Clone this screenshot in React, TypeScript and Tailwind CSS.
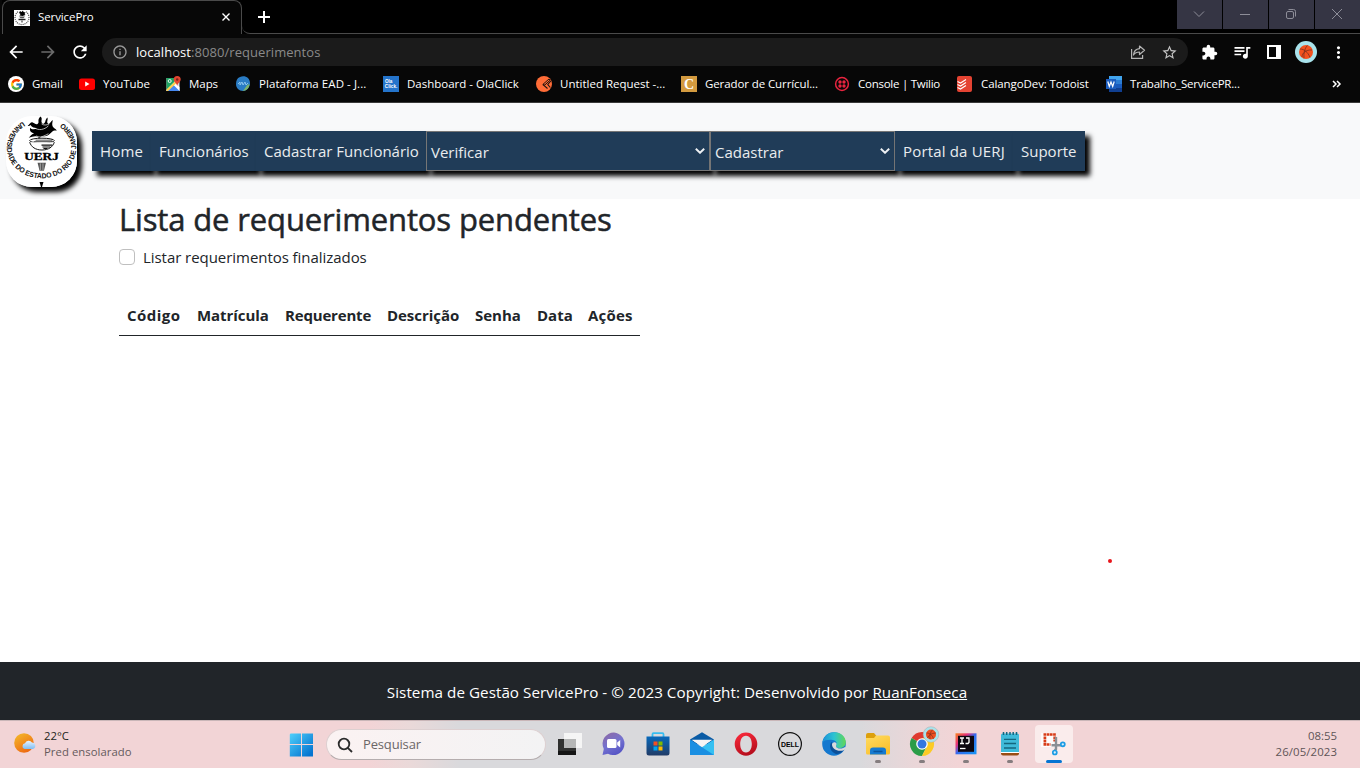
import type { ReactNode } from 'react';
import { FcGoogle } from 'react-icons/fc';
import {
  MdArrowBack,
  MdArrowForward,
  MdRefresh,
  MdInfoOutline,
  MdStarBorder,
  MdExtension,
  MdQueueMusic,
  MdMoreVert,
} from 'react-icons/md';

function UerjFavicon({ className }: { className: string }) {
  return (
    <svg viewBox="0 0 16 16" className={className}>
      <path d="M0 0h16v16H0z" fill="#fff" />
      <path d="M4 1.800A7 7 0 1 0 12 1.800" stroke="#555" strokeWidth="1.200" strokeDasharray="1.100 .9" fill="none" />
      <path d="M6 1l1.500 1L9 .5l.5 1.500 2 .5-1 1.500 1 1-3 1-3-.5 1-1.500-1.500-1z" fill="#000" />
      <path d="M5 6.500h6L9.500 8.300h-3z" fill="#555" />
      <path d="M4.500 9.500h7" stroke="#222" strokeWidth="1.400" />
      <path d="M8 10.500v2" stroke="#444" strokeWidth="1.200" />
    </svg>
  );
}

function UerjLogo({ className }: { className: string }) {
  return (
    <svg viewBox="0 0 72 72" className={className}>
      <defs>
        <path id="outer" d="M18 5.200 A35.200 31.200 0 1 0 55 5.700" />
      </defs>
      <rect width="72" height="72" fill="#fff" />
      <text fontFamily="Liberation Sans, sans-serif" fontWeight="700" fontSize="7.400" fill="#111" textLength="166" lengthAdjust="spacingAndGlyphs">
        <textPath href="#outer" startOffset="1">UNIVERSIDADE DO ESTADO DO RIO DE JANEIRO</textPath>
      </text>
      <path
        d="M35 .5c3 2.500-1 5 2.500 7.500C41 7 39 4 42 1.500c1 3-1.500 4.500 1 6.500 2-.5 2.500-3 4.500-4-.5 3-1.500 5.500 1 8 1 1 2.500 1.500 3 3-2-.5-3.500 0-5 1.200-2.500 2-3.500 3.800-7 4.300-3 .3-4.500.5-6 2.500-.5-2-2-2.500-4-2.500-2 0-4 1-6.500 1.500 2-1.500 2.500-3.500 5.500-4.500-2.500-.5-5-1.500-4-5.500 1.500 2.200 5 1.800 7 .5-3-.5-6-1.500-6.500-3.500-1 1-2 1.500-3 1 2-1.500 3-4 5-3.500 2 .4 3 2.500 5 1.500 2.500-1.300-1-4 3-7.500z"
        fill="#000"
      />
      <path d="M31 20c3 3 8 0 12-2M29 12c4 3 10 2 14-2M36 8c3 2 6 1 8 0" stroke="#fff" strokeWidth=".7" fill="none" />
      <ellipse cx="36.500" cy="25" rx="12.500" ry="2.500" fill="#fff" stroke="#111" strokeWidth="1" />
      <path d="M30 24.500h17M28 26h19" stroke="#222" strokeWidth=".8" />
      <path d="M24 26.500c1.500 5 6 8 12.500 8s11-3 12.500-8" fill="#fff" stroke="#111" strokeWidth="1" />
      <path d="M36 29.500h11M37 31.500h8M38 33h4" stroke="#111" strokeWidth="1.100" />
      <text x="36" y="45" textAnchor="middle" fontFamily="Liberation Serif, serif" fontWeight="700" fontSize="11" textLength="35" lengthAdjust="spacingAndGlyphs" stroke="#000" strokeWidth=".3">
        UERJ
      </text>
      <path d="M32 47.500h8.500l-2 8h-4.500z" fill="#555" />
      <path d="M34.800 48v7M37.500 48v7" stroke="#ddd" strokeWidth=".6" />
      <path d="M34 67h4l-1.500 5h-1z" fill="#000" />
    </svg>
  );
}

function Basketball({ className }: { className: string }) {
  return (
    <svg viewBox="0 0 22 22" className={className}>
      <circle cx="11" cy="11" r="11" fill="#a9e3ec" />
      <circle cx="11" cy="11" r="7" fill="#f4511e" />
      <path d="M5 8c4 0 8 3 10 8.500M12.500 4.300c-3 3-4 8-3.500 13M7 16c0-4 4-7.500 10-7" stroke="#6b2a1c" strokeWidth=".7" fill="none" />
    </svg>
  );
}

function Bookmark({ icon, label, className, text = 'tracking-normal' }: { icon: ReactNode; label: string; className: string; text?: string }) {
  return (
    <div className={`flex shrink-0 items-center gap-2 ${className}`}>
      <span className="flex size-4 shrink-0 items-center justify-center">{icon}</span>
      <span className={`whitespace-nowrap ${text}`}>{label}</span>
    </div>
  );
}

function WindowButton({ children }: { children: ReactNode }) {
  return (
    <div className="flex h-[29px] w-[45px] items-center justify-center bg-[#353544]">
      <svg viewBox="0 0 12 12" className="mr-[2px] mb-px size-3 overflow-visible" fill="none" stroke="#8d8d98" strokeWidth="1">
        {children}
      </svg>
    </div>
  );
}

function BrowserChrome() {
  return (
    <div className="h-[103px] border-b border-[#3a3a3a] bg-[#070707] text-white">
      <div className="flex h-[34px] items-start bg-black">
        <div className="h-[34px] w-[2px] bg-[#070707]" />
        <div className="flex h-[34px] w-[240px] items-center rounded-t-lg border border-b-0 border-[#4a4a4a] bg-[#070707] pl-[11px] pr-[11px]">
          <UerjFavicon className="size-4" />
          <span className="ml-2 mb-[2px] grow text-[11.5px] tracking-[-0.1px]">ServicePro</span>
          <svg viewBox="0 0 8 8" className="mb-px size-2" stroke="#fff" strokeWidth="1.400">
            <path d="M.5.5l7 7M7.500.5l-7 7" />
          </svg>
        </div>
        <div className="flex h-[34px] grow items-center rounded-bl-lg border-b border-[#4a4a4a]">
          <svg viewBox="0 0 12 12" className="ml-4 size-3" stroke="#fff" strokeWidth="2">
            <path d="M0 6h12M6 0v12" />
          </svg>
        </div>
        <div className="flex h-[34px] gap-px border-b border-[#4a4a4a]">
          <WindowButton>
            <path d="M1 3.500l5 5 5-5" />
          </WindowButton>
          <WindowButton>
            <path d="M1 6.500h10" />
          </WindowButton>
          <WindowButton>
            <rect x="1.500" y="3.500" width="7" height="7" rx="1.500" />
            <path d="M3.500 1.500h5a2 2 0 0 1 2 2v5" />
          </WindowButton>
          <WindowButton>
            <path d="M1 1l10 10M11 1L1 11" />
          </WindowButton>
        </div>
      </div>
      <div className="flex h-9 items-center pl-[6px]">
        <MdArrowBack className="size-5" />
        <MdArrowForward className="ml-3 size-5 text-[#6b6b6b]" />
        <MdRefresh className="ml-3 size-5" />
        <div className="ml-3 flex h-7 w-[1086px] items-center rounded-full bg-[#1b1b1b] pl-[10px] pr-[10px]">
          <MdInfoOutline className="size-4 text-[#9a9a9a]" />
          <span className="ml-2 grow pt-px text-[13px] tracking-[0.06px] text-[#8a8a8a]">
            <span className="text-white">localhost</span>:8080/requerimentos
          </span>
          <svg viewBox="0 0 16 16" className="size-4" fill="none" stroke="#b5b5b5" strokeWidth="1.2">
            <path d="M1.600 5v9.400h11V11" />
            <path d="M9.500 2l5 4.300-5 4.200V8c-3 0-4.600.8-6 3 .3-3.700 2.300-6 6-6.400z" strokeLinejoin="round" />
          </svg>
          <MdStarBorder className="ml-[15px] size-[17px] text-[#c5c5c5]" />
        </div>
        <MdExtension className="ml-[13px] size-[17px]" />
        <MdQueueMusic className="ml-[14px] mr-px size-5" />
        <svg viewBox="0 0 14 14" className="ml-[14px] size-[14px]">
          <path d="M0 0h14v14H0z" fill="#fff" />
          <path d="M2 2h7v10H2z" fill="#070707" />
        </svg>
        <Basketball className="ml-[14px] size-[22px]" />
        <MdMoreVert className="ml-[12px] size-[19px]" />
      </div>
      <div className="flex h-7 items-center pl-2 text-[11.5px]">
        <Bookmark
          className="w-[71px]"
          text="tracking-[-0.1px]"
          label="Gmail"
          icon={
            <span className="flex size-4 items-center justify-center rounded-full bg-white">
              <FcGoogle className="size-[13px]" />
            </span>
          }
        />
        <Bookmark
          className="w-[87px]"
          label="YouTube"
          text="tracking-[-0.05px]"
          icon={
            <svg viewBox="0 0 16 16">
              <rect y="2.500" width="16" height="11.500" rx="2.500" fill="#f00" />
              <path d="M6.200 5.600v5l4.300-2.500z" fill="#fff" />
            </svg>
          }
        />
        <Bookmark
          className="w-[69px]"
          text="-ml-px tracking-[-0.05px]"
          label="Maps"
          icon={
            <svg viewBox="0 0 16 16">
              <path d="M.500 2h13v13H.5z" fill="#d8dde3" />
              <path d="M.5 2h8v4l-8 8z" fill="#1fa463" />
              <path d="M.5 14L8.500 6l5 5v4H.5z" fill="#fff" />
              <path d="M7.500 9l6 6H1.500z" fill="#4688f1" />
              <path d="M9 5.500L.5 13.500V15h1.500l8.500-8z" fill="#ffd04b" />
              <path d="M11.200 0a3.500 3.500 0 0 1 3.500 3.500C14.700 6 11.700 7 11.200 10c-.5-3-3.500-4-3.500-6.500A3.500 3.500 0 0 1 11.200 0z" fill="#e2452f" />
              <circle cx="11.200" cy="3.500" r="1.200" fill="#7b231b" />
              <circle cx="3.700" cy="5" r="1.500" fill="none" stroke="#fff" strokeWidth=".9" />
            </svg>
          }
        />
        <Bookmark
          className="w-[148px]"
          label="Plataforma EAD - J..."
          text="tracking-[0.06px]"
          icon={
            <svg viewBox="0 0 16 16">
              <path d="M5 1c5-2 10 1 10 6 0 4-3 8-7 8S1 12 1 8c0-3 1-6 4-7z" fill="#2a7cc4" />
              <path d="M14.500 8c0 4-3 7-7 7 3-2 3-6 7-7z" fill="#7cb36a" />
              <path d="M3 8l2-2v3l2-3 1 3 2-3 1 3 2-2" stroke="#9ed2f4" strokeWidth=".8" fill="none" />
            </svg>
          }
        />
        <Bookmark
          className="w-[153px]"
          label="Dashboard - OlaClick"
          icon={
            <svg viewBox="0 0 16 16">
              <path d="M0 0h16v16H0z" fill="#2474cb" />
              <g fontSize="4.600" fontWeight="700" fill="#fff" fontFamily="Liberation Sans, sans-serif">
                <text x="2" y="7.200">Ola</text>
                <text x="1.800" y="12.300" textLength="12.500">Click.</text>
              </g>
            </svg>
          }
        />
        <Bookmark
          className="w-[145px]"
          label="Untitled Request -..."
          icon={
            <svg viewBox="0 0 16 16">
              <circle cx="8" cy="8" r="8" fill="#ff6c37" />
              <path d="M13 3L6.800 8.500l2 .5 5.500-5z" fill="#ff6c37" stroke="#1d130f" strokeWidth="1" />
              <path d="M7 8.700l4.500 3.800M14.800 5l-3 3.500 2.500 3" stroke="#1d130f" strokeWidth="1.100" fill="none" />
            </svg>
          }
        />
        <Bookmark
          className="w-[153px]"
          label="Gerador de Currícul..."
          text="tracking-[-0.1px]"
          icon={
            <svg viewBox="0 0 16 16">
              <path d="M0 0h16v16H0z" fill="#d39a3f" />
              <text x="8" y="12.800" fontSize="14" fontWeight="700" fill="#fff" textAnchor="middle" fontFamily="Liberation Serif, serif">C</text>
            </svg>
          }
        />
        <Bookmark
          className="w-[122px]"
          label="Console | Twilio"
          text="tracking-[-0.26px]"
          icon={
            <svg viewBox="0 0 16 16">
              <circle cx="8" cy="8" r="6.400" fill="none" stroke="#e8243f" strokeWidth="1.500" />
              <g fill="#e8243f">
                <circle cx="6" cy="6" r="1.700" />
                <circle cx="10" cy="6" r="1.700" />
                <circle cx="6" cy="10" r="1.700" />
                <circle cx="10" cy="10" r="1.700" />
              </g>
            </svg>
          }
        />
        <Bookmark
          className="w-[150px]"
          text="ml-px tracking-[-0.09px]"
          label="CalangoDev: Todoist"
          icon={
            <svg viewBox="0 0 16 16">
              <rect x="1" width="15" height="16" rx="2" fill="#e44332" />
              <path d="M1.500 5.500l3 1.500L10 3.500M1.500 8.500l3 1.500L10 6.500M1.500 11.500l3 1.500L10 9.500" stroke="#fff" strokeWidth="1.100" fill="none" />
            </svg>
          }
        />
        <Bookmark
          className="w-[226px]"
          label="Trabalho_ServicePR..."
          text="tracking-[-0.2px]"
          icon={
            <svg viewBox="0 0 16 16">
              <path d="M3 0h13v4H3z" fill="#41a5ee" />
              <path d="M3 4h13v4H3z" fill="#2b7cd3" />
              <path d="M3 8h13v4H3z" fill="#185abd" />
              <path d="M3 12h13v4H3z" fill="#103f91" />
              <path d="M0 3h10v10H0z" fill="#1b5cbe" />
              <path d="M1.800 5.500L3.300 10.500 5 6l1.700 4.500L8.200 5.500" stroke="#fff" strokeWidth="1.200" fill="none" />
            </svg>
          }
        />
        <svg viewBox="0 0 10 8" className="h-2 w-[10px]" fill="none" stroke="#fff" strokeWidth="1.500">
          <path d="M1 1l3 3-3 3M5 1l3 3-3 3" />
        </svg>
      </div>
    </div>
  );
}

function NavLink({ label, className }: { label: string; className: string }) {
  return (
    <a className={`flex h-10 shrink-0 items-center whitespace-nowrap bg-[#203c58] pl-2 pt-px shadow-[5px_5px_5px_black] ${className}`}>{label}</a>
  );
}

function NavSelect({ label, className }: { label: string; className: string }) {
  return (
    <div className={`flex h-10 shrink-0 items-center justify-between border border-[#767676] bg-[#203c58] pl-1 pr-1 shadow-[5px_5px_5px_black] ${className}`}>
      <span className="pt-[2px]">{label}</span>
      <svg viewBox="0 0 10 6" className="h-[6px] w-[10px]" fill="none" stroke="#eef1f4" strokeWidth="1.900">
        <path d="M.8.8L5 4.800 9.200.8" />
      </svg>
    </div>
  );
}

function SiteHeader() {
  return (
    <header className="flex h-24 items-start bg-[#f8f9fa] pl-[6px]">
      <div className="mt-[13px] size-[71px] overflow-hidden rounded-[26px] shadow-[5px_5px_5px_black]">
        <UerjLogo className="size-[71px]" />
      </div>
      <nav className="ml-[15px] mt-7 flex text-[15px] text-[#e9ecef]">
        <NavLink label="Home" className="w-[59px] tracking-[0.2px]" />
        <NavLink label="Funcionários" className="w-[105px]" />
        <NavLink label="Cadastrar Funcionário" className="w-[170px]" />
        <NavSelect label="Verificar" className="w-[284px]" />
        <NavSelect label="Cadastrar" className="w-[185px]" />
        <NavLink label="Portal da UERJ" className="w-[118px] tracking-[0.17px]" />
        <NavLink label="Suporte" className="w-[72px]" />
      </nav>
    </header>
  );
}

function Requests() {
  return (
    <main className="h-[463px] bg-white pl-[119px] text-[#212529]">
      <h1 className="h-[46px] pt-px text-[31px] leading-[38px] tracking-[-0.14px] [-webkit-text-stroke:0.5px_#212529]">Lista de requerimentos pendentes</h1>
      <label className="flex h-6 items-center">
        <span className="size-4 rounded-[4px] border border-[#bfbfbf] bg-white" />
        <span className="ml-2 text-[15px] tracking-[-0.05px]">Listar requerimentos finalizados</span>
      </label>
      <div className="mt-[27px] flex h-10 w-[521px] border-b border-[#212529] text-[15px] font-bold leading-[38px]">
        <span className="w-[70px] shrink-0 whitespace-nowrap pl-2 tracking-[0.45px]">Código</span>
        <span className="w-[88px] shrink-0 whitespace-nowrap pl-2 tracking-[-0.05px]">Matrícula</span>
        <span className="w-[102px] shrink-0 whitespace-nowrap pl-2 tracking-[-0.18px]">Requerente</span>
        <span className="w-[88px] shrink-0 whitespace-nowrap pl-2 tracking-[-0.05px]">Descrição</span>
        <span className="w-[62px] shrink-0 whitespace-nowrap pl-2">Senha</span>
        <span className="w-[51px] shrink-0 whitespace-nowrap pl-2">Data</span>
        <span className="whitespace-nowrap pl-2 tracking-[0.2px]">Ações</span>
      </div>
    </main>
  );
}

function TaskIcon({ children, running = false }: { children: ReactNode; running?: boolean }) {
  return (
    <div className="flex h-[47px] w-11 shrink-0 flex-col items-center">
      <svg viewBox="0 0 24 24" className="mt-[11px] size-6 overflow-visible">{children}</svg>
      {running && <span className="mt-1 h-[3px] w-[6px] rounded-full bg-[#857d7f]" />}
    </div>
  );
}

function Taskbar() {
  return (
    <div className="flex h-12 items-start border-t border-[#c9b6b8] bg-[linear-gradient(90deg,#f2d4d6_0,#f2d4d6_370px,#ead9d9_410px,#d9d9dc_460px,#d9d9dc_860px,#ead6d8_915px,#f2d4d6_960px)]">
      <svg viewBox="0 0 24 24" className="ml-[14px] mt-[10px] size-6">
        <defs>
          <linearGradient id="sun" x2=".6" y2="1">
            <stop stopColor="#f4bd2c" />
            <stop offset="1" stopColor="#ee6a12" />
          </linearGradient>
          <linearGradient id="cloud" x2="0" y2="1">
            <stop stopColor="#e9f4ff" />
            <stop offset="1" stopColor="#7fbdf2" />
          </linearGradient>
        </defs>
        <circle cx="10" cy="12" r="9.800" fill="url(#sun)" />
        <path d="M10.500 18a3 3 0 0 1 .5-5.800 4 4 0 0 1 7-.7 3.300 3.300 0 0 1 .8 6.500z" fill="url(#cloud)" />
      </svg>
      <div className="ml-[6px] mt-[7px] w-[245px] text-[11.3px] leading-4">
        <div className="text-[#231f20]">22°C</div>
        <div className="tracking-[0.06px] text-[#655a5c]">Pred ensolarado</div>
      </div>
      <svg viewBox="0 0 24 24" className="mt-3 size-6">
        <defs>
          <linearGradient id="win" x2="1" y2="1">
            <stop stopColor="#4fd0fb" />
            <stop offset=".9" stopColor="#0574d0" />
          </linearGradient>
        </defs>
        <path d="M1.500.5H12V11H.8V1.500zM13 .5h11V11H13zM.8 12H12v11.500H.8zM13 12h11v11.500H13z" fill="url(#win)" />
      </svg>
      <div className="ml-[13px] mt-[8px] flex h-[31px] w-[220px] items-center rounded-full border border-b-[#b5adae] border-[#ddd0d1] bg-linear-to-r from-[#fbf2f2] to-[#f3f3f4] pl-[10px]">
        <svg viewBox="0 0 16 16" className="size-4" fill="none" stroke="#2b2b2b" strokeWidth="1.800">
          <circle cx="7" cy="7" r="5.300" />
          <path d="M10.800 10.800L15 15" />
        </svg>
        <span className="ml-[10px] text-[13px] tracking-[-0.15px] text-[#6b6667]">Pesquisar</span>
      </div>
      <div className="ml-[2px] flex">
        <TaskIcon>
          <path d="M0 7h18v16H0z" fill="#2f302f" />
          <path d="M0 19h18v4H0z" fill="#151515" />
          <path d="M6 1h18v15H6z" fill="#f5f5f5" />
          <path d="M6 7h12v9H6z" fill="#b5b6b6" />
        </TaskIcon>
        <TaskIcon>
          <defs>
            <linearGradient id="chat" x1=".2" x2=".7" y2="1">
              <stop stopColor="#8c6aa8" />
              <stop offset=".5" stopColor="#7472d0" />
              <stop offset="1" stopColor="#5352c4" />
            </linearGradient>
          </defs>
          <path d="M12 .5a11.300 11.300 0 1 1-6 21.300L.5 23l1.300-6A11.300 11.300 0 0 1 12 .5z" fill="url(#chat)" />
          <rect x="5" y="7" width="9.500" height="9" rx="1.500" fill="#fff" />
          <path d="M15.200 10.500l3-2.500v7.500l-3-2.500z" fill="#fff" />
        </TaskIcon>
        <TaskIcon>
          <defs>
            <linearGradient id="store" x2="0" y2="1">
              <stop stopColor="#0869bb" />
              <stop offset="1" stopColor="#213b66" />
            </linearGradient>
          </defs>
          <path d="M6.500 5V2.200a1 1 0 0 1 1-1h9a1 1 0 0 1 1 1V5" fill="none" stroke="#38bdf0" strokeWidth="1.800" />
          <path d="M.5 4.500h23V21a2.500 2.500 0 0 1-2.500 2.500H3A2.500 2.500 0 0 1 .5 21z" fill="url(#store)" />
          <path d="M7.500 9.500h4v4h-4z" fill="#f25022" />
          <path d="M12.500 9.500h4v4h-4z" fill="#7fba00" />
          <path d="M7.500 14.500h4v4h-4z" fill="#00a4ef" />
          <path d="M12.500 14.500h4v4h-4z" fill="#ffb900" />
        </TaskIcon>
        <TaskIcon>
          <path d="M0 7.500L12 .2l12 7.300-3 5H3z" fill="#0a5ba5" />
          <path d="M2 7.800h20L12 15z" fill="#f5f5f5" />
          <path d="M24 7.500V23L0 23z" fill="#35c0f2" />
          <path d="M0 7.500L24 23H0z" fill="#1a8fe2" />
          <path d="M2 8h20l-10 6.400z" fill="#f5f5f5" />
        </TaskIcon>
        <TaskIcon>
          <defs>
            <linearGradient id="opera" x2=".4" y2="1">
              <stop stopColor="#ff2b3d" />
              <stop offset="1" stopColor="#b80f1e" />
            </linearGradient>
          </defs>
          <path fillRule="evenodd" d="M12 .5a11.300 11.600 0 1 1 0 23.200A11.300 11.600 0 0 1 12 .5zm0 3.200c-4 0-5.800 4-5.800 8.400s1.800 8.400 5.800 8.400 5.800-4 5.800-8.400S16 3.700 12 3.700z" fill="url(#opera)" />
        </TaskIcon>
        <TaskIcon>
          <circle cx="12" cy="12" r="11.400" fill="none" stroke="#111" strokeWidth="1.200" />
          <text x="12" y="14.900" fontFamily="Liberation Sans, sans-serif" fontWeight="700" fontSize="8" textAnchor="middle" textLength="18" lengthAdjust="spacingAndGlyphs">DELL</text>
        </TaskIcon>
        <TaskIcon>
          <defs>
            <linearGradient id="edgeTop" x2="1">
              <stop stopColor="#1b90d8" />
              <stop offset=".5" stopColor="#2cc3d2" />
              <stop offset="1" stopColor="#62d856" />
            </linearGradient>
          </defs>
          <circle cx="12" cy="12" r="11.800" fill="#1478cf" />
          <path d="M.4 10.500C2 3 7 .2 12.500.2 19 .2 23.800 5 23.800 10c0 4-3 6-6.500 6-3 0-4-1.500-3-3 1-2 0-4.500-3.500-5C7 7.500 2 8 .4 10.500z" fill="url(#edgeTop)" />
          <path d="M9.500 10c-3 4-1 10 4.500 12 3.500 0 7-2 8.500-5-6 2.500-11-1-11.500-4.500z" fill="#0c4f98" />
          <path d="M10 12.500c0-1.500 1.500-2.500 2.800-2.200 2 .5 2 2 1.400 3-.8 1.600.8 3.200 3.800 3.200 2.500 0 4-.8 5-1.600l1 .8-1.500 2.200c-6 2.500-12.500-.500-12.500-5.400z" fill="#d9d9dc" />
        </TaskIcon>
        <TaskIcon running>
          <defs>
            <linearGradient id="folder" x2=".6" y2="1">
              <stop stopColor="#ffdc62" />
              <stop offset="1" stopColor="#fbc02d" />
            </linearGradient>
          </defs>
          <path d="M0 3a2 2 0 0 1 2-2h6l2.500 3H22v6H0z" fill="#dda00d" />
          <path d="M0 6h8l2-2.500h12a2 2 0 0 1 2 2V21a1.500 1.500 0 0 1-1.500 1.500h-21A1.500 1.500 0 0 1 0 21z" fill="url(#folder)" />
          <path d="M4 22.500v-4a3 3 0 0 1 3-3h10a3 3 0 0 1 3 3v4z" fill="#177bd0" />
          <path d="M7.500 19.500h9" stroke="#0b559e" strokeWidth="1.500" />
        </TaskIcon>
        <TaskIcon running>
          <path d="M12 12L1.600 6A12 12 0 0 1 22.400 6z" fill="#df3a30" />
          <path d="M12 12L1.600 6A12 12 0 0 0 12 24l4-8z" fill="#2b9c47" />
          <path d="M12 24A12 12 0 0 0 22.400 6H12l5 8z" fill="#fccb25" />
          <circle cx="12" cy="12" r="5.800" fill="#fff" />
          <circle cx="12" cy="12" r="4.500" fill="#3377e0" />
          <g transform="translate(13.500 -5)">
            <circle cx="7.500" cy="7.500" r="7.800" fill="#a9e3ec" stroke="#aaa" strokeWidth=".5" />
            <circle cx="7.500" cy="7.500" r="5" fill="#ef4f20" />
            <path d="M3 6c3 0 6 2 7 6M9 2.800c-2 2-3 5-2.500 9.500M4 11c1-3 4-5 8.500-5" stroke="#6b2a1c" strokeWidth=".6" fill="none" />
          </g>
        </TaskIcon>
        <TaskIcon running>
          <defs>
            <linearGradient id="idea" x2="1" y2="1">
              <stop stopColor="#f6831e" />
              <stop offset=".3" stopColor="#e8307b" />
              <stop offset=".5" stopColor="#336bf0" />
              <stop offset="1" stopColor="#1798f5" />
            </linearGradient>
          </defs>
          <path d="M1.500 1.300h21v21h-21z" fill="url(#idea)" />
          <path d="M4 3.800h16v16H4z" fill="#0d0710" />
          <path d="M6 6h4M8 6v5.500M6 11.500h4M12 6h3v4.500l-1 1h-2.500" stroke="#fff" strokeWidth="1.300" fill="none" />
          <path d="M6 16.500h5.500" stroke="#fff" strokeWidth="1.300" />
        </TaskIcon>
        <TaskIcon running>
          <path d="M3 19h18v2.500a2 2 0 0 1-2 2H5a2 2 0 0 1-2-2z" fill="#9a4c13" />
          <path d="M3 19.500h18v1.500H3z" fill="#fff" />
          <path d="M4.500 1.500h15a1.500 1.500 0 0 1 1.500 1.500v17H3V3a1.500 1.500 0 0 1 1.500-1.500z" fill="#3fbad9" />
          <path d="M5.500 0v3M8.700 0v3M12 0v3M15.200 0v3M18.500 0v3" stroke="#136780" strokeWidth="1.500" />
          <path d="M6 7.300h12M6 11.500h12M6 16h12" stroke="#14677f" strokeWidth="1.300" />
        </TaskIcon>
        <div className="ml-[3px] mt-1 flex h-[38px] w-[38px] flex-col items-center rounded-[4px] bg-[#faecec]">
          <svg viewBox="0 0 24 24" className="mt-[7px] size-6 overflow-visible">
            <path d="M-1 1h14v14H-1z" fill="#fff" opacity=".8" />
            <path d="M1.500 2.500h12.500M12.700 4.500v5M2.900 4.500v9M1.500 12.500h7" fill="none" stroke="#d83b17" strokeWidth="2.700" strokeDasharray="2.700 .5" />
            <path d="M14 5v12l-1.500 2M9.500 13.200h9.500" fill="none" stroke="#8b8f95" strokeWidth="2.400" />
            <circle cx="20.800" cy="12.300" r="2" fill="#d9effa" stroke="#1b9be4" strokeWidth="1.700" />
            <circle cx="12.800" cy="20.500" r="2" fill="#d9effa" stroke="#1b9be4" strokeWidth="1.700" />
          </svg>
          <span className="mt-1 h-[3px] w-4 rounded-full bg-[#0675d3]" />
        </div>
      </div>
      <div className="grow pr-[23px] pt-[7px] text-right text-[11.400px] leading-4 text-[#5f5456]">
        <div>08:55</div>
        <div className="tracking-[0.1px]">26/05/2023</div>
      </div>
    </div>
  );
}

export default function App() {
  return (
    <div className="relative h-[768px] w-[1360px] overflow-hidden bg-white font-['Open_Sans',sans-serif]">
      <BrowserChrome />
      <SiteHeader />
      <Requests />
      <footer className="flex h-[58px] items-center justify-center bg-[#212529] pr-[6px] pt-[3px] text-[15.2px] tracking-[0.05px] text-white">
        <span>
          Sistema de Gestão ServicePro - © 2023 Copyright: Desenvolvido por <a className="underline">RuanFonseca</a>
        </span>
      </footer>
      <Taskbar />
      <span className="absolute left-[1108px] top-[559px] size-1 rounded-full bg-[#e8151b]" />
    </div>
  );
}
